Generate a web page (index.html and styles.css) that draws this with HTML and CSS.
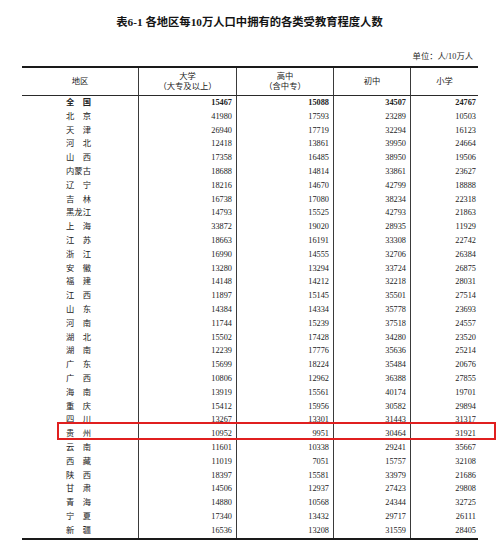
FILE: index.html
```html
<!DOCTYPE html>
<html lang="zh-CN">
<head>
<meta charset="utf-8">
<title>表6-1 各地区每10万人口中拥有的各类受教育程度人数</title>
<link rel="stylesheet" href="styles.css">
</head>
<body>
<div class="page">
  <h1 class="title">表6-1 各地区每10万人口中拥有的各类受教育程度人数</h1>
  <div class="unit">单位：人/10万人</div>
  <table class="edu">
    <colgroup>
      <col class="c-region"><col class="c-uni"><col class="c-high"><col class="c-mid"><col class="c-pri">
    </colgroup>
    <thead>
      <tr>
        <th>地区</th>
        <th><span class="hl">大学</span><span class="hl">（大专及以上）</span></th>
        <th><span class="hl">高中</span><span class="hl">（含中专）</span></th>
        <th>初中</th>
        <th>小学</th>
      </tr>
    </thead>
    <tbody>
      <tr class="total"><td>全　国</td><td>15467</td><td>15088</td><td>34507</td><td>24767</td></tr>
      <tr><td>北　京</td><td>41980</td><td>17593</td><td>23289</td><td>10503</td></tr>
      <tr><td>天　津</td><td>26940</td><td>17719</td><td>32294</td><td>16123</td></tr>
      <tr><td>河　北</td><td>12418</td><td>13861</td><td>39950</td><td>24664</td></tr>
      <tr><td>山　西</td><td>17358</td><td>16485</td><td>38950</td><td>19506</td></tr>
      <tr><td>内蒙古</td><td>18688</td><td>14814</td><td>33861</td><td>23627</td></tr>
      <tr><td>辽　宁</td><td>18216</td><td>14670</td><td>42799</td><td>18888</td></tr>
      <tr><td>吉　林</td><td>16738</td><td>17080</td><td>38234</td><td>22318</td></tr>
      <tr><td>黑龙江</td><td>14793</td><td>15525</td><td>42793</td><td>21863</td></tr>
      <tr><td>上　海</td><td>33872</td><td>19020</td><td>28935</td><td>11929</td></tr>
      <tr><td>江　苏</td><td>18663</td><td>16191</td><td>33308</td><td>22742</td></tr>
      <tr><td>浙　江</td><td>16990</td><td>14555</td><td>32706</td><td>26384</td></tr>
      <tr><td>安　徽</td><td>13280</td><td>13294</td><td>33724</td><td>26875</td></tr>
      <tr><td>福　建</td><td>14148</td><td>14212</td><td>32218</td><td>28031</td></tr>
      <tr><td>江　西</td><td>11897</td><td>15145</td><td>35501</td><td>27514</td></tr>
      <tr><td>山　东</td><td>14384</td><td>14334</td><td>35778</td><td>23693</td></tr>
      <tr><td>河　南</td><td>11744</td><td>15239</td><td>37518</td><td>24557</td></tr>
      <tr><td>湖　北</td><td>15502</td><td>17428</td><td>34280</td><td>23520</td></tr>
      <tr><td>湖　南</td><td>12239</td><td>17776</td><td>35636</td><td>25214</td></tr>
      <tr><td>广　东</td><td>15699</td><td>18224</td><td>35484</td><td>20676</td></tr>
      <tr><td>广　西</td><td>10806</td><td>12962</td><td>36388</td><td>27855</td></tr>
      <tr><td>海　南</td><td>13919</td><td>15561</td><td>40174</td><td>19701</td></tr>
      <tr><td>重　庆</td><td>15412</td><td>15956</td><td>30582</td><td>29894</td></tr>
      <tr><td>四　川</td><td>13267</td><td>13301</td><td>31443</td><td>31317</td></tr>
      <tr class="marked"><td><span class="mark" aria-hidden="true"></span>贵　州</td><td>10952</td><td>9951</td><td>30464</td><td>31921</td></tr>
      <tr><td>云　南</td><td>11601</td><td>10338</td><td>29241</td><td>35667</td></tr>
      <tr><td>西　藏</td><td>11019</td><td>7051</td><td>15757</td><td>32108</td></tr>
      <tr><td>陕　西</td><td>18397</td><td>15581</td><td>33979</td><td>21686</td></tr>
      <tr><td>甘　肃</td><td>14506</td><td>12937</td><td>27423</td><td>29808</td></tr>
      <tr><td>青　海</td><td>14880</td><td>10568</td><td>24344</td><td>32725</td></tr>
      <tr><td>宁　夏</td><td>17340</td><td>13432</td><td>29717</td><td>26111</td></tr>
      <tr><td>新　疆</td><td>16536</td><td>13208</td><td>31559</td><td>28405</td></tr>
    </tbody>
  </table>
</div>
</body>
</html>
```

FILE: styles.css
```css
html, body {
  margin: 0;
  padding: 0;
  background: #ffffff;
}

body {
  font-family: "Liberation Serif", "Noto Sans CJK SC", serif;
  color: #1e1e1e;
}

.page {
  width: 499px;
  overflow: hidden;
}

.title {
  margin: 15px 0 0;
  font-size: 11.3px;
  line-height: 14px;
  font-weight: bold;
  text-align: center;
  color: #141414;
}

.unit {
  margin-top: 22px;
  padding-right: 26px;
  font-size: 8.3px;
  line-height: 12px;
  text-align: right;
  color: #2a2a2a;
}

.edu {
  margin: 3px 0 0 22px;
  width: 456px;
  table-layout: fixed;
  border-collapse: separate;
  border-spacing: 0;
  border-top: 2px solid #1a1a1a;
  border-bottom: 2px solid #1a1a1a;
}

.c-region { width: 116px; }
.c-uni { width: 98px; }
.c-high { width: 97px; }
.c-mid { width: 77px; }
.c-pri { width: 68px; }

.edu th {
  height: 27px;
  padding: 0;
  font-size: 8.3px;
  line-height: 10px;
  font-weight: normal;
  text-align: center;
  vertical-align: middle;
  border-bottom: 1px solid #2a2a2a;
  color: #222;
}

.hl {
  display: block;
}

.edu td {
  height: 13.8px;
  padding: 0 4px 0 0;
  font-size: 8.3px;
  line-height: 13.8px;
  text-align: right;
  white-space: nowrap;
  color: #222;
}

.edu th + th,
.edu td + td {
  border-left: 1px solid #3a3a3a;
}

.edu td:first-child {
  text-align: center;
  padding: 0 3px 0 0;
  position: relative;
}

.edu td:last-child {
  padding-right: 2px;
}

.total td {
  font-weight: bold;
}

.mark {
  position: absolute;
  left: 35px;
  top: -5px;
  width: 439px;
  height: 18px;
  box-sizing: border-box;
  border: 2px solid #e01f1f;
  pointer-events: none;
}
```
